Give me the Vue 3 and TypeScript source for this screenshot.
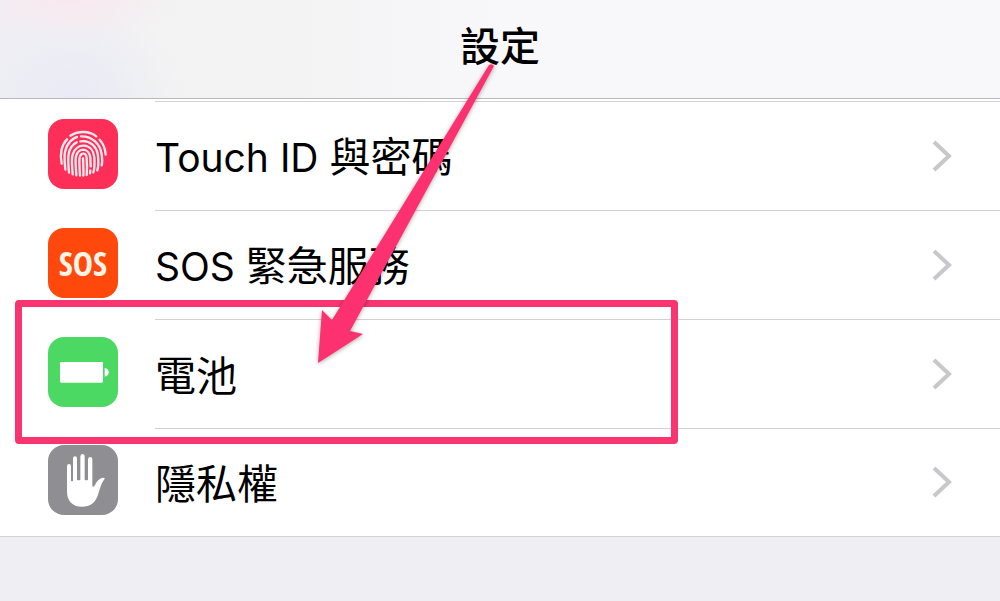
<script setup lang="ts">
type IconName = 'touch' | 'sos' | 'battery' | 'privacy'

interface SettingItem {
  icon: IconName
  latin?: string
  label: string
  highlighted?: boolean
}

const items: SettingItem[] = [
  { icon: 'touch', latin: 'Touch ID ', label: '與密碼' },
  { icon: 'sos', latin: 'SOS ', label: '緊急服務' },
  { icon: 'battery', label: '電池', highlighted: true },
  { icon: 'privacy', label: '隱私權' },
]
</script>

<template>
  <div class="screen">
    <header class="bar">
      <h1 class="title">設定</h1>
    </header>
    <main>
      <ul class="list">
        <li v-for="item in items" :key="item.icon" class="item">
          <a href="#" class="row">
            <span class="icon" :class="item.icon">
              <svg v-if="item.icon === 'touch'" viewBox="0 0 210 210" aria-hidden="true">
                <g fill="none" stroke="#ffe9ee" stroke-width="7" stroke-linecap="round">
                  <path d="M67 50C90 35 124 35 145 52" />
                  <path d="M41 134C34 104 42 76 57 61" />
                  <path d="M155 62C166 74 172 90 173 107" />
                  <path d="M52 152C50 132 48 113 51 99C57 71 75 57 87 54" />
                  <path d="M99 52C133 51 157 75 161 106C163 121 163 132 161 139" />
                  <path d="M63 161C61 138 59 120 62 105C65 88 74 76 86 70" />
                  <path d="M97 67C125 62 147 82 150 111C152 130 151 144 148 154" />
                  <path d="M74 166C73 145 69 123 74 106C80 88 94 79 108 80C126 81 137 96 139 115C140 133 140 149 136 160" />
                  <path d="M85 169C84 147 81 125 84 112C88 98 96 92 106 92C119 93 126 105 127 117L128 142" />
                  <path d="M96 170C95 149 93 128 95 115C97 106 103 103 107 104C114 105 116 113 116 120C118 140 117 156 116 168" />
                  <path d="M106 170C107 153 106 136 105 118" />
                  <path d="M127 154L126 163" />
                </g>
              </svg>
              <span v-else-if="item.icon === 'sos'" class="sos-text" aria-hidden="true">SOS</span>
              <svg v-else-if="item.icon === 'battery'" viewBox="0 0 210 210" aria-hidden="true">
                <rect x="36" y="75" width="129" height="62" rx="4" fill="#fff" />
                <path d="M170 93Q182 95 182 106Q182 117 170 119Z" fill="#fff" />
              </svg>
              <svg v-else viewBox="0 0 210 210" aria-hidden="true">
                <path
                  fill="#fff"
                  d="M57 64Q57 57 63 57Q69 57 69 64V107Q72 110 75 107V41Q75 34 81 34Q87 34 87 41V104Q92 108 97 104V35Q97 27 103 27Q110 27 110 35V104Q115 108 120 104V43Q120 36 127 36Q133 36 133 43V124Q137 127 141 120C148 106 157 97 168 98Q172 99 169 103C159 116 157 130 150 149C143 172 127 185 102 185C72 185 57 166 57 140Z"
                />
              </svg>
            </span>
            <span class="label"><span v-if="item.latin" class="latin">{{ item.latin }}</span>{{ item.label }}</span>
            <svg class="chevron" viewBox="0 0 20 32" aria-hidden="true">
              <path d="M2 2L17 16L2 30" fill="none" stroke="#c7c7cc" stroke-width="4" />
            </svg>
          </a>
          <span v-if="item.highlighted" class="highlight"></span>
        </li>
      </ul>
    </main>
    <svg class="arrow" viewBox="0 0 190 310" aria-hidden="true">
      <path fill="#fd3070" d="M179 5Q182 3 184 6L40 271L53 274L8 303L12 250L22 260Z" />
    </svg>
  </div>
</template>

<style>
html,
body {
  margin: 0;
  background: #eeeef3;
}
</style>

<style scoped>
.screen {
  position: relative;
  overflow: hidden;
  min-height: 100vh;
  background: #eeeef3;
  color: #000;
  font-family: Inter, "Noto Sans CJK TC", sans-serif;
}

.bar {
  display: flex;
  align-items: center;
  justify-content: center;
  height: 98px;
  border-bottom: 1px solid #b9b9bd;
  background:
    radial-gradient(ellipse 110px 40px at 70px 0, #f8e8ef, transparent),
    radial-gradient(ellipse 110px 100px at 75px 98px, #e9eaf5, transparent),
    linear-gradient(90deg, #f0eff4, #f3f3f3 16%, #f3f3f4 30%, #f8f8fa 50%, #f8f8fa);
}

.title {
  margin: 0;
  padding-bottom: 4px;
  font-size: 40px;
  font-weight: 500;
  line-height: 60px;
}

.list {
  margin: 0;
  padding: 2px 0 0;
  list-style: none;
  background: #fff;
  border-bottom: 1px solid #d2d2d6;
}

.item {
  position: relative;
}

.row {
  display: grid;
  grid-template-columns: 107px 1fr 20px;
  align-items: center;
  height: 109px;
  padding: 0 48px;
  color: inherit;
  text-decoration: none;
  background: linear-gradient(#d2d2d6, #d2d2d6) 155px 0 / 100% 1px no-repeat;
}

.item:last-child .row {
  height: 108px;
}

.icon {
  display: flex;
  align-items: center;
  justify-content: center;
  width: 70px;
  height: 70px;
  margin-bottom: 4px;
  border-radius: 16px;
  overflow: hidden;
}

.icon svg {
  width: 100%;
  height: 100%;
}

.touch {
  background: #fd2f58;
}

.sos {
  background: #ff480c;
}

.battery {
  background: #4bd964;
}

.privacy {
  background: #8e8e93;
}

.sos-text {
  color: #fff3e6;
  font-family: "Liberation Sans Narrow", "Open Sans Condensed", "Liberation Sans", sans-serif;
  font-size: 34px;
  font-weight: 700;
}

.label {
  padding-top: 4px;
  font-size: 41px;
  line-height: 60px;
  white-space: nowrap;
}

.latin {
  font-size: 39px;
  white-space: pre;
}

.chevron {
  width: 20px;
  height: 32px;
}

.highlight {
  position: absolute;
  z-index: 1;
  top: -19px;
  left: 15px;
  box-sizing: border-box;
  width: 663px;
  height: 144px;
  border: 7px solid #f9356f;
  border-radius: 4px;
  pointer-events: none;
}

.arrow {
  position: absolute;
  z-index: 2;
  top: 60px;
  left: 310px;
  width: 190px;
  height: 310px;
  filter: drop-shadow(0 1px 2px rgba(0, 0, 0, 0.35));
  pointer-events: none;
}
</style>
